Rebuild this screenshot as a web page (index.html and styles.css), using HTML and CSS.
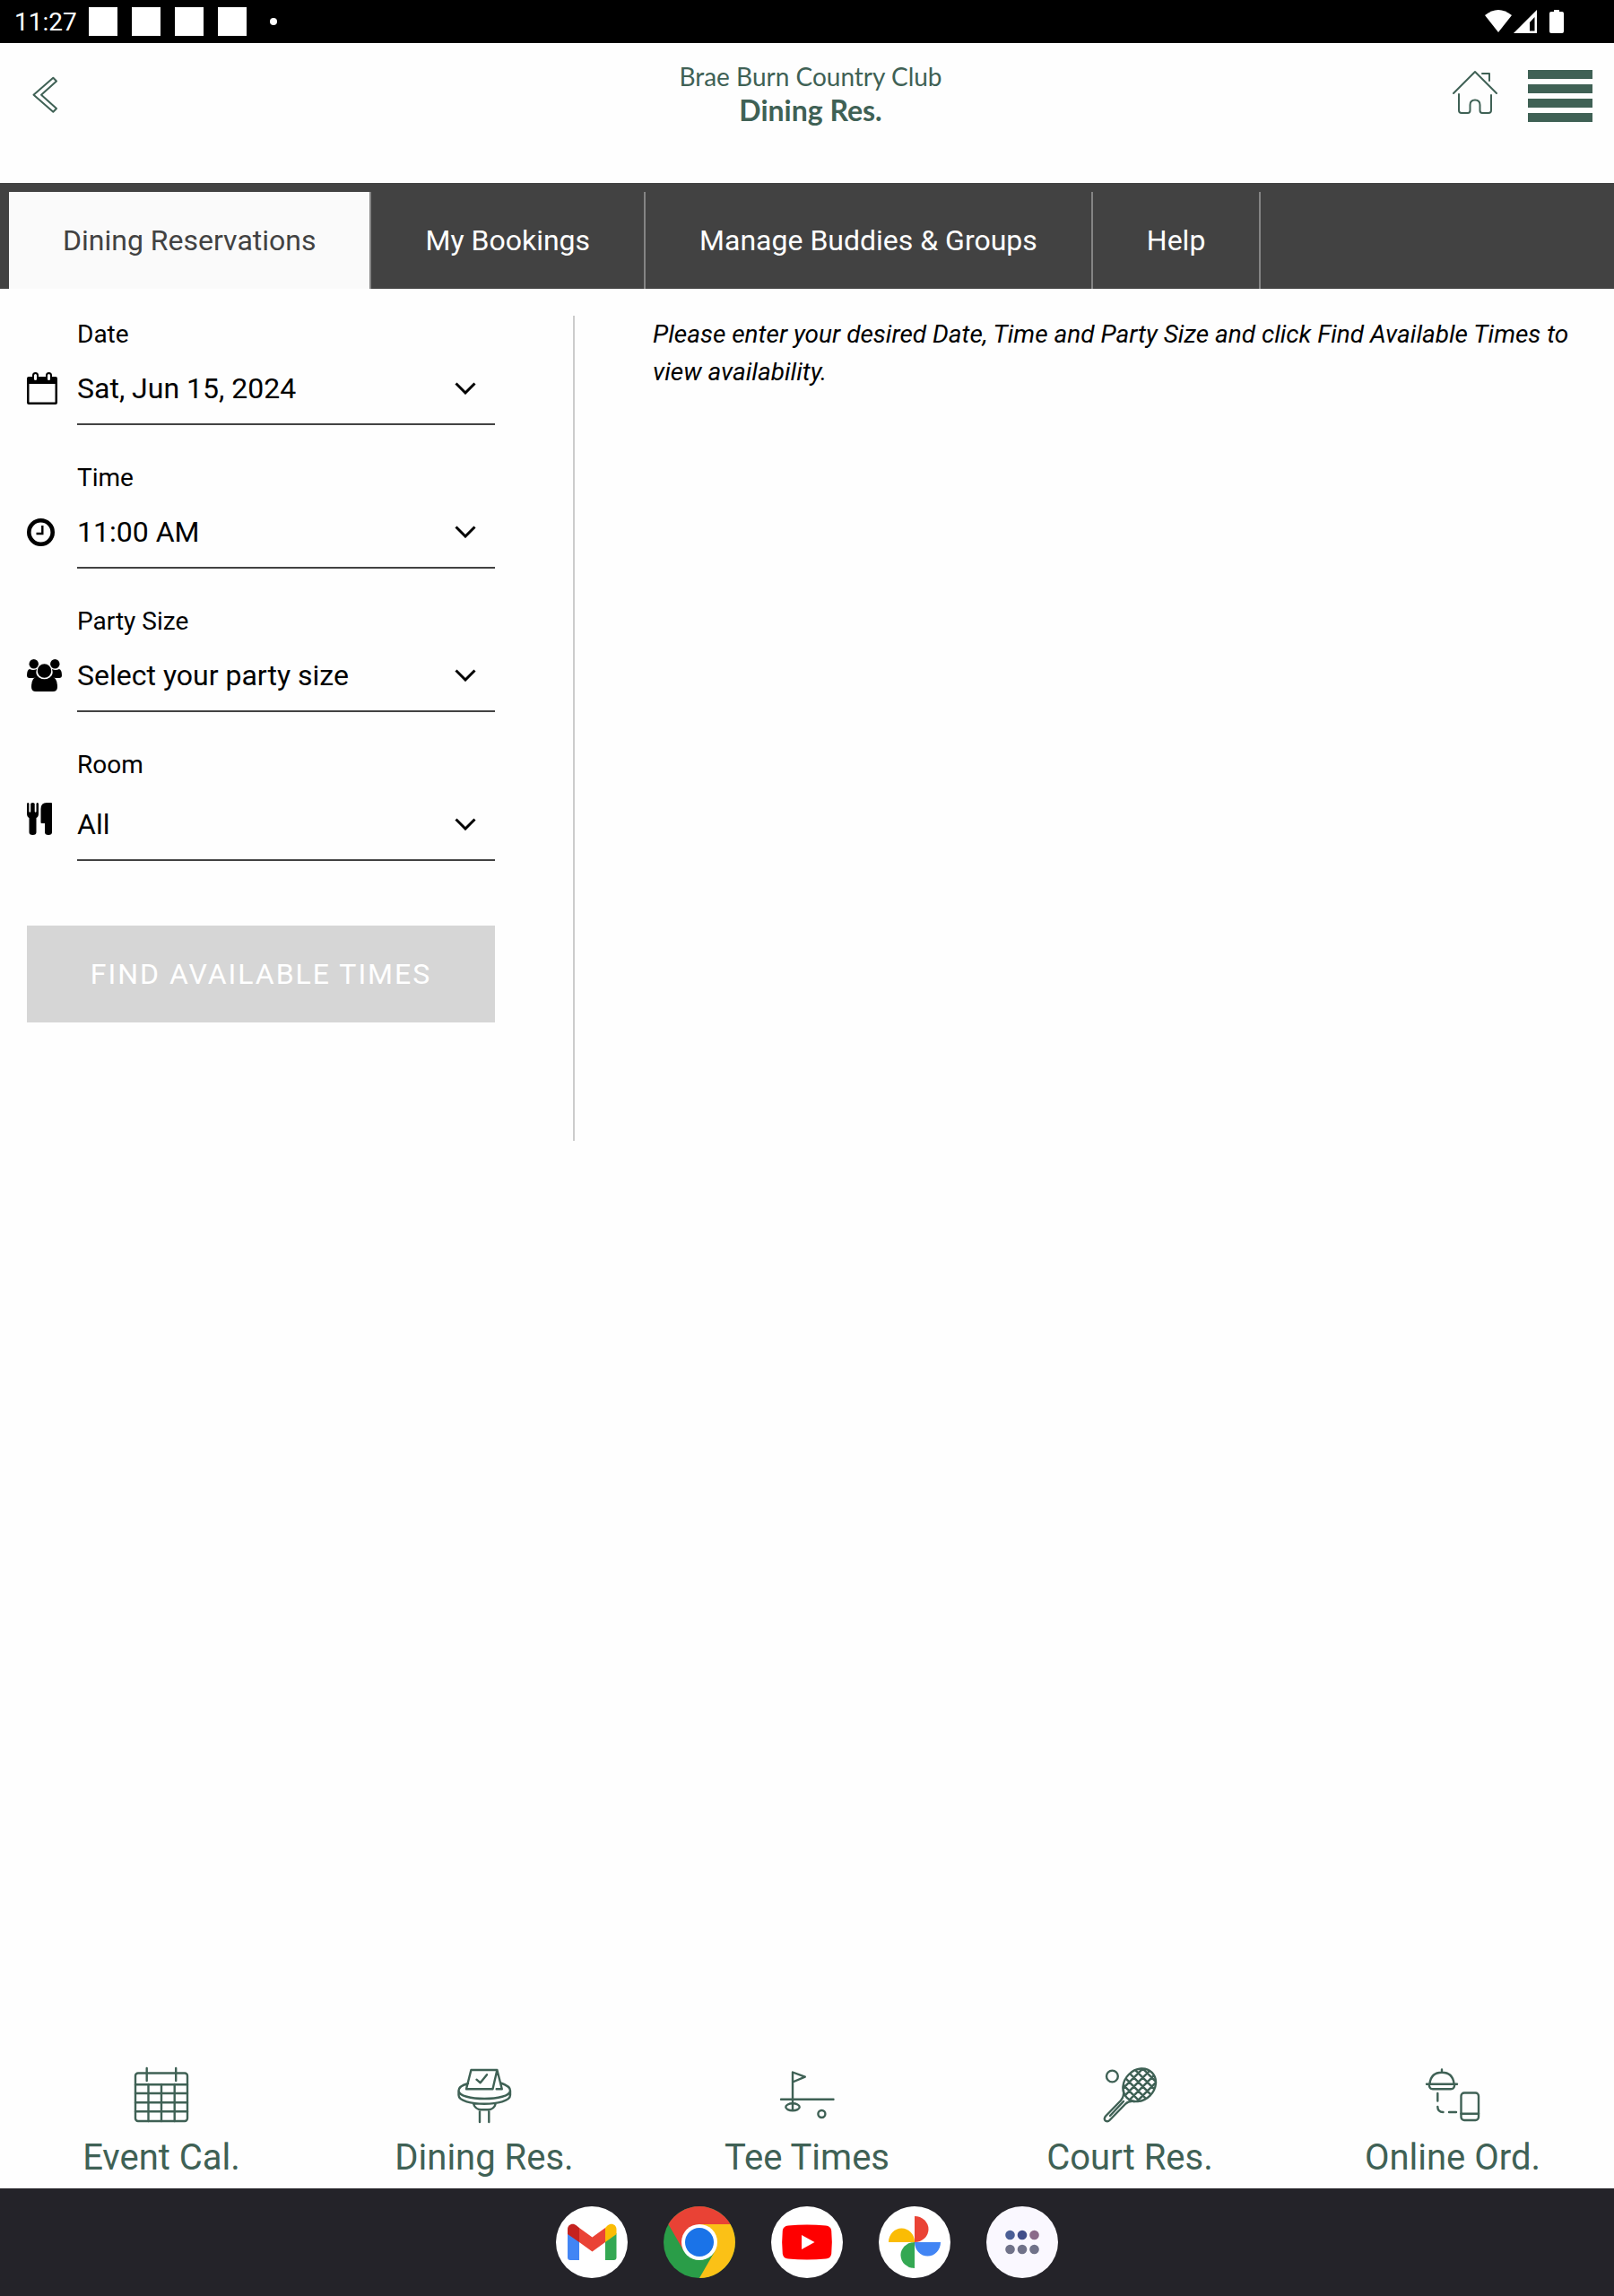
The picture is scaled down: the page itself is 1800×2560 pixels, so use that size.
FILE: index.html
```html
<!DOCTYPE html>
<html lang="en">
<head>
    <meta charset="UTF-8">
    <meta name="viewport" content="width=device-width, initial-scale=1.0">
    <title>Dining Res.</title>
    <link rel="stylesheet" href="styles.css">
</head>
<body>
    <div class="status">
        <span class="clock">11:27</span>
        <span class="notice"></span>
        <span class="notice"></span>
        <span class="notice"></span>
        <span class="notice"></span>
        <span class="dot"></span>
        <svg class="signals" width="90" height="28" viewBox="0 0 90 28" fill="#fff">
            <path d="M0 7Q15 -5 30 7L15 26Z"/>
            <path d="M58 1V27H32ZM55.500 9L50 15V24.500H55.500Z" fill-rule="evenodd"/>
            <path d="M77 1H83V3H86Q88 3 88 5V25Q88 27 86 27H74Q72 27 72 25V5Q72 3 74 3H77Z"/>
        </svg>
    </div>

    <header class="header">
        <a class="back" href="#" aria-label="Back">
            <svg width="30" height="42" viewBox="0 0 30 42"><path d="M1.500 20.700L23.300 1.700L27 5.500L10 20.700L27 36L23.300 39.700Z"/></svg>
        </a>
        <div class="title">
            <p>Brae Burn Country Club</p>
            <h1>Dining Res.</h1>
        </div>
        <div class="tools">
            <a href="#" aria-label="Home">
                <svg width="50" height="50" viewBox="0 0 50 50"><path d="M1 26L25 2L49 26M33 4H41V12M7 27V45Q7 48 10 48H17Q19.500 48 19.500 45V39Q19.500 33.500 25 33.500Q30.500 33.500 30.500 39V45Q30.500 48 33 48H40Q43 48 43 45V28"/></svg>
            </a>
            <button class="menu" aria-label="Menu"><i></i><i></i><i></i><i></i></button>
        </div>
    </header>

    <nav class="tabs">
        <a class="active" href="#">Dining Reservations</a>
        <a href="#">My Bookings</a>
        <a href="#">Manage Buddies &amp; Groups</a>
        <a href="#">Help</a>
    </nav>

    <main class="main">
        <form class="search">
            <div class="field">
                <label for="date">Date</label>
                <span class="icon">
                    <svg width="34" height="36" viewBox="0 0 34 36">
                        <path fill-rule="evenodd" d="M2 5H32Q34 5 34 7V34Q34 36 32 36H2Q0 36 0 34V7Q0 5 2 5ZM2.500 13V33.500H31.500V13Z"/>
                        <rect x="7" y="1" width="5" height="9" rx="2.500" fill="#fff" stroke="#000" stroke-width="2"/>
                        <rect x="22" y="1" width="5" height="9" rx="2.500" fill="#fff" stroke="#000" stroke-width="2"/>
                    </svg>
                </span>
                <select id="date"><option>Sat, Jun 15, 2024</option></select>
            </div>
            <div class="field">
                <label for="time">Time</label>
                <span class="icon">
                    <svg width="31" height="31" viewBox="0 0 31 31" fill="none" stroke="#000">
                        <circle cx="15.500" cy="15.500" r="13.200" stroke-width="4.600"/>
                        <path d="M17.300 8V17H10.500" stroke-width="2.400"/>
                    </svg>
                </span>
                <select id="time"><option>11:00 AM</option></select>
            </div>
            <div class="field">
                <label for="party">Party Size</label>
                <span class="icon">
                    <svg width="39" height="36" viewBox="0 0 39 36">
                        <circle cx="7.700" cy="5.200" r="5.200"/>
                        <circle cx="31.300" cy="5.200" r="5.200"/>
                        <path d="M3 11Q7 13 11 11Q9 17 13 20Q9 21 6 21H3Q0 21 0 18Q0 12 3 11ZM36 11Q32 13 28 11Q30 17 26 20Q30 21 33 21H36Q39 21 39 18Q39 12 36 11Z"/>
                        <circle cx="19.500" cy="13" r="7.700"/>
                        <path d="M12 19.500Q19.500 25 27 19.500Q34 20 34 31Q34 36 29 36H10Q5 36 5 31Q5 20 12 19.500Z"/>
                    </svg>
                </span>
                <select id="party"><option>Select your party size</option></select>
            </div>
            <div class="field room">
                <label for="room">Room</label>
                <span class="icon">
                    <svg width="28" height="36" viewBox="0 0 28 36">
                        <path d="M0 1Q1.200 -1 2.400 1V10Q3.300 11.500 4.200 10V1Q6.500 -1 8.700 1V10Q9.600 11.500 10.500 10V1Q11.700 -1 13 1V12Q13 16 10.500 17V33Q10.500 36 6.500 36Q2.500 36 2.500 33V17Q0 16 0 12Z"/>
                        <path d="M28 1V33Q28 36 24 36Q20 36 20 33V23H16.500Q15.500 23 15.500 22V7Q15.500 0 22 0H27Q28 0 28 1Z"/>
                    </svg>
                </span>
                <select id="room"><option>All</option></select>
            </div>
            <button class="find" type="submit" disabled>FIND AVAILABLE TIMES</button>
        </form>
        <section class="results">
            <p>Please enter your desired Date, Time and Party Size and click Find Available Times to view availability.</p>
        </section>
    </main>

    <nav class="shortcuts">
        <a href="#">
            <svg width="64" height="64" viewBox="0 0 64 64"><rect x="3" y="7.500" width="58" height="53.500" rx="3"/><path d="M15.700 2V16M48.200 2V16M3 20.300H61M3 30H61M3 40.300H61M3 50.300H61M17.500 20V61M32 20V61M46.700 20V61"/></svg>
            Event Cal.
        </a>
        <a href="#">
            <svg width="64" height="64" viewBox="0 0 64 64"><path d="M17.400 4H46.400L41.500 25.300H12ZM46.400 4L51.800 25.300H45.700M23.500 14.700L27.700 18.300L35 9.300M14 19Q3.500 22 3.500 27C3.500 39 61 39 61 27Q61 22 50.500 18.500M3.500 27V32C3.500 45 61 45 61 32V27M19.700 41Q22 48.300 29 48.300H36Q43 48.300 45 41M27 48.300V62M37.300 48.300V62"/></svg>
            Dining Res.
        </a>
        <a href="#">
            <svg width="64" height="64" viewBox="0 0 64 64"><path d="M3 36.700H61.500M16 48.500V6.500L29.800 11.700L16 17.500"/><ellipse cx="16" cy="45.300" rx="7.700" ry="4"/><circle cx="48.400" cy="53" r="4"/></svg>
            Tee Times
        </a>
        <a href="#">
            <svg width="64" height="64" viewBox="0 0 64 64">
                <clipPath id="head"><ellipse cx="42.700" cy="20.800" rx="19.800" ry="16.700" transform="rotate(-45 42.700 20.800)"/></clipPath>
                <circle cx="12.400" cy="11" r="6.400"/>
                <ellipse cx="42.700" cy="20.800" rx="19.800" ry="16.700" transform="rotate(-45 42.700 20.800)"/>
                <path clip-path="url(#head)" d="M16 12L50 46M20 6L58 44M26 2L64 40M32 -2L68 34M40 -4L70 26M18 31L52 -3M21 38L61 -2M26 43L68 1M36 43L70 9"/>
                <path d="M25 27Q26 33 22 38L5 55.500Q2.500 59 5 60.700Q7.500 62 9.500 60L27 42Q31 38 37 39M10 55L25 39"/>
            </svg>
            Court Res.
        </a>
        <a href="#">
            <svg width="64" height="64" viewBox="0 0 64 64"><path d="M20 3.500V6.500M6.500 19Q8 6.700 20 6.700Q32 6.700 33.500 19M3 19.700H37M5.700 20Q6 25.300 10 25.300H30Q34 25.300 34.300 20M15.300 30V38.500M15.300 45Q15.300 51 21.500 51M28 51H36"/><rect x="41.500" y="29.500" width="19.500" height="30.500" rx="3.500"/><path d="M41.500 52.700H61"/></svg>
            Online Ord.
        </a>
    </nav>

    <nav class="dock">
        <a href="#" aria-label="Gmail">
            <svg width="80" height="80" viewBox="0 0 80 80">
                <circle cx="40" cy="40" r="40" fill="#fff"/>
                <path fill="#4285f4" d="M13 30L26 38V60H16Q13 60 13 57Z"/>
                <path fill="#34a853" d="M67.500 30L55 38V60H64.500Q67.500 60 67.500 57Z"/>
                <path fill="#c5221f" d="M13 31V26C13 20 19 18 23 21.500L26 24V40Z"/>
                <path fill="#fbbc04" d="M67.500 31V26C67.500 20 61.500 18 57.500 21.500L55 24V40Z"/>
                <path fill="#ea4335" d="M26 24L40.500 34.500L55 24V40L40.500 50.500L26 40Z"/>
            </svg>
        </a>
        <a href="#" aria-label="Chrome">
            <svg width="80" height="80" viewBox="0 0 80 80">
                <circle cx="40" cy="40" r="40" fill="#2a9d48"/>
                <path fill="#fbc116" d="M40 20H74.600A40 40 0 0 1 40 80L57.300 50Z"/>
                <path fill="#e94235" d="M5.400 20A40 40 0 0 1 74.600 20H40L22.700 50Z"/>
                <circle cx="40" cy="40" r="20" fill="#fff"/>
                <circle cx="40" cy="40" r="16" fill="#1a73e8"/>
            </svg>
        </a>
        <a href="#" aria-label="YouTube">
            <svg width="80" height="80" viewBox="0 0 80 80">
                <circle cx="40" cy="40" r="40" fill="#fff"/>
                <path fill="#f00" d="M19 21.500Q40 19.500 61 21.500Q66.500 22 67.200 27Q68.500 40 67.200 53Q66.500 58 61 58.500Q40 60.500 19 58.500Q13.500 58 12.800 53Q11.500 40 12.800 27Q13.500 22 19 21.500Z"/>
                <path fill="#fff" d="M34 32V48L48.500 40Z"/>
            </svg>
        </a>
        <a href="#" aria-label="Photos">
            <svg width="80" height="80" viewBox="0 0 80 80">
                <circle cx="40" cy="40" r="40" fill="#fff"/>
                <path fill="#ea4335" d="M40 11A15.500 14.500 0 0 1 40 40Z"/>
                <path fill="#fbbc04" d="M11 40A14.500 15.500 0 0 1 40 40Z"/>
                <path fill="#4285f4" d="M69 40A14.500 15.500 0 0 1 40 40Z"/>
                <path fill="#34a853" d="M40 69A15.500 14.500 0 0 1 40 40Z"/>
            </svg>
        </a>
        <a href="#" aria-label="All apps">
            <svg width="80" height="80" viewBox="0 0 80 80">
                <circle cx="40" cy="40" r="40" fill="#faf8ff"/>
                <circle cx="26.500" cy="32" r="5.300" fill="#4b5f96"/>
                <circle cx="40" cy="32" r="5.300" fill="#424f8a"/>
                <circle cx="53.500" cy="32" r="5.300" fill="#8a6b8a"/>
                <g fill="#707289"><circle cx="26.500" cy="48" r="5.300"/><circle cx="40" cy="48" r="5.300"/><circle cx="53.500" cy="48" r="5.300"/></g>
            </svg>
        </a>
    </nav>
</body>
</html>
```
FILE: styles.css
```css
*{
    box-sizing: border-box;
}
body{
    margin: 0;
    min-height: 100vh;
    display: flex;
    flex-direction: column;
    background: #fefefe;
    color: #000;
    font-family: Roboto, sans-serif;
    font-size: 32px;
}
a{
    color: inherit;
    text-decoration: none;
}
p,h1{
    margin: 0;
}
svg{
    display: block;
}
/* status bar */
.status{
    display: flex;
    align-items: center;
    gap: 16px;
    height: 48px;
    padding: 0 54px 0 16px;
    background: #000;
    color: #fff;
    font-size: 28px;
}
.clock{
    margin-right: -3px;
}
.notice{
    width: 32px;
    height: 32px;
    background: #fff;
}
.dot{
    width: 8px;
    height: 8px;
    margin-left: 10px;
    border-radius: 50%;
    background: #fff;
}
.signals{
    margin-left: auto;
}
/* header */
.header{
    display: grid;
    grid-template-columns: 180px 1fr 172px;
    align-items: start;
    height: 156px;
    padding: 18px 24px 0 24px;
    color: #3f6155;
}
.header svg,.shortcuts svg{
    fill: none;
    stroke: #3f6155;
    stroke-width: 2;
    stroke-linecap: round;
    stroke-linejoin: round;
}
.back{
    padding: 19px 12px;
}
.title{
    text-align: center;
    font-family: Lato, sans-serif;
    font-size: 28px;
    line-height: 38px;
}
.title h1{
    font-size: 32px;
    line-height: 38px;
}
.tools{
    display: flex;
    justify-content: flex-end;
    gap: 34px;
    padding-top: 12px;
}
.menu{
    display: grid;
    align-content: start;
    gap: 6px;
    width: 72px;
    padding: 0;
    border: none;
    background: none;
}
.menu i{
    height: 10px;
    background: #3f6155;
}
/* tabs */
.tabs{
    display: flex;
    padding: 10px 10px 0;
    background: #424242;
    color: #fff;
}
.tabs a{
    padding: 0 60px;
    border-right: 2px solid #848484;
    line-height: 108px;
}
.tabs .active{
    background: #fafafa;
    color: #424242;
}
/* search form */
.main{
    flex: 1;
    display: grid;
    grid-template-columns: 35% 1fr;
    align-content: start;
    padding: 30px;
}
.search{
    padding: 0 87px 132px 0;
}
.field{
    display: grid;
    grid-template-columns: 56px 1fr;
    margin-bottom: 38px;
}
.field label{
    grid-column: 2;
    font-size: 28px;
    line-height: 42px;
}
.icon{
    display: flex;
    align-items: center;
    height: 78px;
}
.field select{
    appearance: none;
    width: 100%;
    height: 80px;
    padding: 0;
    border: none;
    border-bottom: 2px solid #424242;
    border-radius: 0;
    background: url("data:image/svg+xml,%3Csvg xmlns='http://www.w3.org/2000/svg' width='24' height='14' fill='none' stroke='%23000' stroke-width='3'%3E%3Cpath d='M1.500 1.500L12 12L22.500 1.500'/%3E%3C/svg%3E") no-repeat right 21px center content-box;
    color: #000;
    font-family: inherit;
    font-size: 32px;
}
.room select{
    height: 86px;
    padding-top: 6px;
}
.find{
    width: 100%;
    height: 108px;
    margin-top: 34px;
    border: none;
    background: #d6d6d6;
    color: #fff;
    font-family: inherit;
    font-size: 32px;
    letter-spacing: 2px;
}
.results{
    padding-left: 87px;
    border-left: 2px solid #ccc;
    font-size: 28px;
    font-style: italic;
    line-height: 42px;
}
/* bottom links */
.shortcuts{
    display: grid;
    grid-template-columns: repeat(5, 1fr);
    color: #3f6155;
    font-size: 40px;
    line-height: 68px;
}
.shortcuts a{
    display: flex;
    flex-direction: column;
    align-items: center;
    gap: 4px;
}
.shortcuts svg{
    stroke-width: 2.400;
}
.dock{
    display: flex;
    justify-content: center;
    gap: 40px;
    padding: 20px 0;
    background: #242329;
}
```
